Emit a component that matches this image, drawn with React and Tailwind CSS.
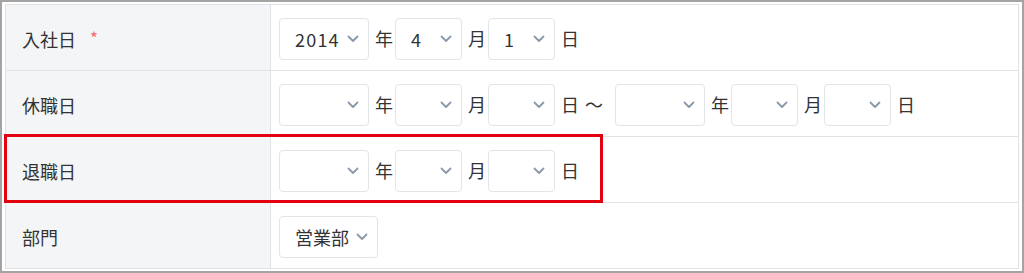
import React from "react";

const font = { fontFamily: '"Noto Sans CJK JP", "Noto Sans", sans-serif' };

const Chevron = () => (
  <svg width="12" height="8" viewBox="0 0 12 8" className="shrink-0">
    <polyline
      points="1.5,1.5 6,6 10.5,1.5"
      fill="none"
      stroke="#8c99aa"
      strokeWidth="1.8"
      strokeLinecap="round"
      strokeLinejoin="round"
    />
  </svg>
);

// digits render wider in the original, so only numbers get extra tracking
const Select = ({ value, width }) => (
  <div
    className={`flex h-[42px] items-center justify-between rounded-[4px] border border-[#e1e4e9] bg-white pl-[15px] pr-[9px] text-[18px] text-[#333] ${width}`}
  >
    <span className={`pt-[1px] ${/^\d+$/.test(value) ? "tracking-[1.2px]" : ""}`}>
      {value}
    </span>
    <Chevron />
  </div>
);

const Unit = ({ children, mr = "mr-[2px]" }) => (
  <span className={`text-[18px] text-[#333] ml-[6px] ${mr}`}>{children}</span>
);

const Row = ({ label, required, children }) => (
  <div className="flex h-[66px] border-b border-[#dfe3e8]">
    <div className="flex w-[265px] items-center border-r border-[#dfe3e8] bg-[#f4f5f7] pl-[16px] pt-[4px] text-[18px] text-[#333]">
      {label}
      {required && (
        <span className="ml-[14px] mb-[4px] text-[17px] text-[#ef6f6f]">*</span>
      )}
    </div>
    <div className="flex flex-1 items-center pl-[8px] pt-[2px]">{children}</div>
  </div>
);

export default function App() {
  return (
    <div
      className="relative h-[273px] w-[1024px] border-2 border-[#a4a4a4] bg-white px-[3px] pt-[2px]"
      style={font}
    >
      <div className="border-t border-l border-r border-[#dfe3e8]">
        <Row label="入社日" required>
          <Select value="2014" width="w-[90px]" />
          <Unit>年</Unit>
          <Select value="4" width="w-[67px]" />
          <Unit>月</Unit>
          <Select value="1" width="w-[67px]" />
          <Unit>日</Unit>
        </Row>
        <Row label="休職日">
          <Select value="" width="w-[90px]" />
          <Unit>年</Unit>
          <Select value="" width="w-[67px]" />
          <Unit>月</Unit>
          <Select value="" width="w-[67px]" />
          <Unit mr="mr-0">日</Unit>
          <Unit mr="mr-[12px]">〜</Unit>
          <Select value="" width="w-[90px]" />
          <Unit>年</Unit>
          <Select value="" width="w-[67px]" />
          <Unit>月</Unit>
          <Select value="" width="w-[67px]" />
          <Unit>日</Unit>
        </Row>
        <Row label="退職日">
          <Select value="" width="w-[90px]" />
          <Unit>年</Unit>
          <Select value="" width="w-[67px]" />
          <Unit>月</Unit>
          <Select value="" width="w-[67px]" />
          <Unit>日</Unit>
        </Row>
        <Row label="部門">
          <Select value="営業部" width="w-[99px]" />
        </Row>
      </div>
      <div className="pointer-events-none absolute left-[2px] top-[132px] h-[69px] w-[599px] border-[3px] border-[#e3000f]" />
    </div>
  );
}
